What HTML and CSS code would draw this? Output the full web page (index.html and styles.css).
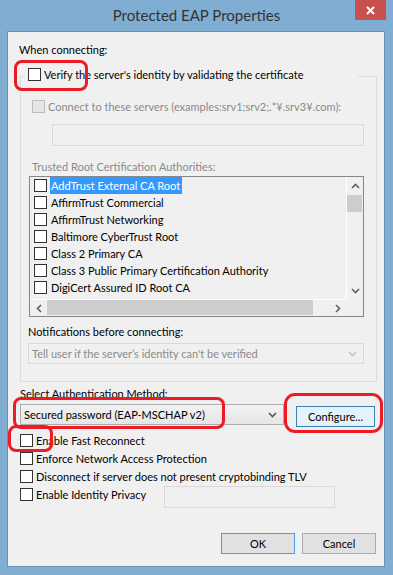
FILE: index.html
```html
<!DOCTYPE html>
<html>
<head>
<meta charset="utf-8">
<title>Protected EAP Properties</title>
<link rel="stylesheet" href="styles.css">
</head>
<body>
<div class="window">
  <div class="titlebar">
    <div class="title">Protected EAP Properties</div>
    <div class="close"><svg width="9" height="9" viewBox="0 0 9 9"><path d="M1 1L8 8M8 1L1 8" stroke="#fff" stroke-width="2" fill="none"/></svg></div>
  </div>
  <div class="client">
    <div class="label l-when">When connecting:</div>
    <div class="group">
      <div class="legend"><span class="cb"></span><span>Verify the server's identity by validating the certificate</span></div>
      <div class="row row-connect disabled"><span class="cb cb-dis"></span><span>Connect to these servers (examples:srv1;srv2;.*¥.srv3¥.com):</span></div>
      <div class="textbox tb-servers"></div>
      <div class="label disabled l-trusted">Trusted Root Certification Authorities:</div>
      <div class="list">
        <div class="items">
          <div class="item"><span class="cb"></span><span class="itext sel">AddTrust External CA Root</span></div>
          <div class="item"><span class="cb"></span><span class="itext">AffirmTrust Commercial</span></div>
          <div class="item"><span class="cb"></span><span class="itext">AffirmTrust Networking</span></div>
          <div class="item"><span class="cb"></span><span class="itext">Baltimore CyberTrust Root</span></div>
          <div class="item"><span class="cb"></span><span class="itext">Class 2 Primary CA</span></div>
          <div class="item"><span class="cb"></span><span class="itext">Class 3 Public Primary Certification Authority</span></div>
          <div class="item"><span class="cb"></span><span class="itext">DigiCert Assured ID Root CA</span></div>
        </div>
        <div class="vscroll">
          <div class="sbtn"><svg width="9" height="6" viewBox="0 0 9 6"><path d="M1 5L4.5 1.5L8 5" stroke="#606060" stroke-width="1.6" fill="none"/></svg></div>
          <div class="vthumb"></div>
          <div class="vspace"></div>
          <div class="sbtn"><svg width="9" height="6" viewBox="0 0 9 6"><path d="M1 1L4.5 4.5L8 1" stroke="#606060" stroke-width="1.6" fill="none"/></svg></div>
        </div>
        <div class="hscroll">
          <div class="sbtn"><svg width="6" height="9" viewBox="0 0 6 9"><path d="M5 1L1.5 4.5L5 8" stroke="#606060" stroke-width="1.6" fill="none"/></svg></div>
          <div class="hthumb"></div>
          <div class="hspace"></div>
          <div class="sbtn"><svg width="6" height="9" viewBox="0 0 6 9"><path d="M1 1L4.5 4.5L1 8" stroke="#606060" stroke-width="1.6" fill="none"/></svg></div>
        </div>
        <div class="corner"></div>
      </div>
      <div class="label l-notif">Notifications before connecting:</div>
      <div class="combo combo-dis"><span>Tell user if the server’s identity can't be verified</span><svg width="9" height="6" viewBox="0 0 9 6"><path d="M1 1L4.5 4.5L8 1" stroke="#C4C4C4" stroke-width="1.6" fill="none"/></svg></div>
    </div>
    <div class="label l-select">Select Authentication Method:</div>
    <div class="method-row">
      <div class="combo combo-method"><span>Secured password (EAP-MSCHAP v2)</span><svg width="9" height="6" viewBox="0 0 9 6"><path d="M1 1L4.5 4.5L8 1" stroke="#555" stroke-width="1.6" fill="none"/></svg></div>
      <div class="btn btn-configure">Configure...</div>
    </div>
    <div class="checks">
      <div class="row"><span class="cb"></span><span>Enable Fast Reconnect</span></div>
      <div class="row"><span class="cb"></span><span>Enforce Network Access Protection</span></div>
      <div class="row"><span class="cb"></span><span>Disconnect if server does not present cryptobinding TLV</span></div>
      <div class="row"><span class="cb"></span><span class="privacy-label">Enable Identity Privacy</span><div class="textbox tb-privacy"></div></div>
    </div>
    <div class="buttons">
      <div class="btn btn-ok">OK</div>
      <div class="btn btn-cancel">Cancel</div>
    </div>
  </div>
  <div class="mark mark-verify"></div>
  <div class="mark mark-method"></div>
  <div class="mark mark-configure"></div>
  <div class="mark mark-fast"></div>
</div>
</body>
</html>
```
FILE: styles.css
```css
* { box-sizing: border-box; }
html, body { margin: 0; padding: 0; }
body {
  background: #80ADD2;
  font-family: Lato, "Noto Sans", sans-serif;
  font-size: 11px;
  color: #000;
}
.window {
  position: relative;
  width: 393px;
  height: 575px;
  background: #80ADD2;
  overflow: hidden;
}
.titlebar {
  height: 31px;
  display: grid;
  grid-template-columns: 1fr auto 1fr;
}
.title {
  grid-column: 2;
  font-size: 15px;
  line-height: 30px;
  color: #333;
  white-space: nowrap;
}
.close {
  grid-column: 3;
  justify-self: end;
  width: 31px;
  height: 20px;
  margin-right: 7px;
  background: #C75050;
  display: flex;
  align-items: center;
  justify-content: center;
}
.client {
  margin: 0 8px 0 7px;
  height: 536px;
  border: 1px solid #6C90B2;
  background: #F0F0F0;
  padding: 0 7px 0 12px;
}
.label { line-height: 15px; height: 15px; white-space: nowrap; }
.disabled { color: #8A8A8A; }
.l-when { margin-top: 10px; margin-left: -1px; }
.group {
  margin-top: 19px;
  border: 1px solid #DCDCDC;
  padding: 0 12px 17px 7px;
}
.legend {
  margin: -11px 0 0 -3px;
  width: 333px;
  height: 17px;
  padding-left: 3px;
  display: flex;
  align-items: center;
  background: #F0F0F0;
  white-space: nowrap;
}
.cb {
  flex: none;
  width: 13px;
  height: 13px;
  border: 1px solid #333;
  background: #fff;
  margin-right: 3px;
}
.cb-dis { border-color: #BCBCBC; background: #E6E6E6; }
.row {
  height: 18px;
  display: flex;
  align-items: center;
  white-space: nowrap;
}
.row-connect { margin-top: 15px; height: 17px; padding-left: 4px; }
.textbox {
  border: 1px solid #D9D9D9;
  background: #F0F0F0;
  height: 22px;
}
.tb-servers { margin: 9px 0 0 24px; }
.l-trusted { margin: 13px 0 0 4px; }
.list {
  margin: 2px 0 0 1px;
  height: 141px;
  border: 1px solid #828790;
  background: #F0F0F0;
  display: grid;
  grid-template-columns: 1fr 17px;
  grid-template-rows: 1fr 17px;
}
.items { overflow: hidden; }
.item {
  height: 17px;
  display: flex;
  align-items: center;
  padding-left: 4px;
  white-space: nowrap;
}
.item .cb { margin-right: 3px; }
.itext { line-height: 17px; height: 17px; padding: 0 2px 0 1px; }
.sel { background: #3399FF; color: #fff; }
.vscroll {
  display: flex;
  flex-direction: column;
  border-left: 1px solid #fff;
  background: #F0F0F0;
}
.sbtn {
  flex: none;
  width: 16px;
  height: 17px;
  display: flex;
  align-items: center;
  justify-content: center;
}
.vthumb { height: 17px; margin: 1px 0 0 0; background: #CDCDCD; width: 15px; }
.vspace { flex: 1; }
.hscroll {
  display: flex;
  background: #F0F0F0;
  border-top: 1px solid #fff;
}
.hscroll .sbtn { width: 17px; height: 16px; }
.hthumb { width: 266px; height: 15px; background: #CDCDCD; }
.hspace { flex: 1; }
.corner { background: #F0F0F0; }
.l-notif { margin-top: 7px; }
.combo {
  height: 21px;
  display: flex;
  align-items: center;
  justify-content: space-between;
  padding: 0 6px 0 3px;
  white-space: nowrap;
}
.combo-dis {
  margin-top: 4px;
  border: 1px solid #D9D9D9;
  color: #8A8A8A;
}
.l-select { margin-top: 4px; }
.method-row {
  margin-top: 3px;
  height: 23px;
  display: flex;
  align-items: flex-start;
}
.combo-method {
  width: 264px;
  border: 1px solid #ACACAC;
  background: linear-gradient(#F2F2F2, #E6E6E6);
}
.btn {
  height: 21px;
  display: flex;
  align-items: center;
  justify-content: center;
  background: #E1E1E1;
  border: 1px solid #ADADAD;
}
.btn-configure {
  margin: 2px 0 0 12px;
  width: 79px;
  border-color: #3C7FB1;
  background: #E5F1FB;
}
.checks { margin-top: 4px; }
.privacy-label { width: 128px; }
.tb-privacy { width: 171px; flex: none; margin-top: 5px; height: 22px; }
.buttons {
  margin-top: 30px;
  display: flex;
  justify-content: flex-end;
  gap: 7px;
  padding-right: 1px;
}
.btn-ok, .btn-cancel { width: 74px; }
.btn-ok { border-color: #4A9EE8; }
.mark {
  position: absolute;
  border: 3px solid #ED1C24;
  border-radius: 8px;
}
.mark-verify { left: 14px; top: 60px; width: 74px; height: 31px; }
.mark-method { left: 13px; top: 397px; width: 212px; height: 32px; }
.mark-configure { left: 284px; top: 393px; width: 99px; height: 40px; border-radius: 11px; }
.mark-fast { left: 8px; top: 425px; width: 45px; height: 27px; }
```
